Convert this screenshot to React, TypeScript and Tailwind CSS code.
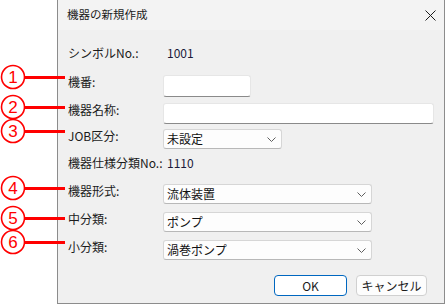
const FONT = { fontFamily: '"Noto Sans CJK JP", "Noto Sans", sans-serif' };

const CALLOUTS = [
  { n: '1', y: 77 },
  { n: '2', y: 107 },
  { n: '3', y: 131 },
  { n: '4', y: 188 },
  { n: '5', y: 218 },
  { n: '6', y: 242 },
];

function Callout({ n, y }: { n: string; y: number }) {
  return (
    <div className="absolute left-0 flex items-center" style={{ top: y - 13 }}>
      <svg width="26" height="26" viewBox="0 0 26 26" className="shrink-0">
        <circle cx="13" cy="13" r="11.5" fill="white" stroke="#ff0000" strokeWidth="1.6" />
        <text x="13" y="19" textAnchor="middle" fontSize="17" fill="#ff0000" fontFamily="Liberation Sans, sans-serif">
          {n}
        </text>
      </svg>
      <div className="w-[40px] h-[3px] bg-[#ff0000] -ml-[1px]" />
    </div>
  );
}

function Chevron() {
  return (
    <svg width="9" height="5" viewBox="0 0 9 5" className="shrink-0">
      <path d="M0.5 0.5 L4.5 4.5 L8.5 0.5" fill="none" stroke="#5f5f5f" strokeWidth="1" />
    </svg>
  );
}

function Select({ value, width }: { value: string; width: number }) {
  return (
    <div
      className="h-[20px] flex items-center justify-between pl-[3px] pr-[5px] bg-[#fdfdfd] border border-[#d6d6d6] border-b-[#b8b8b8] rounded-[3px] text-[12px] text-[#111]"
      style={{ width }}
    >
      <span className="leading-[16px]">{value}</span>
      <Chevron />
    </div>
  );
}

function Row({ label, mt, h, children }: { label: string; mt: number; h: number; children: React.ReactNode }) {
  return (
    <div className="flex items-start" style={{ marginTop: mt, height: h }}>
      <div className="w-[95px] text-[12px] leading-[16px] text-[#1b1b1b] -mt-[1px] whitespace-nowrap">{label}</div>
      {children}
    </div>
  );
}

export default function App() {
  return (
    <div className="relative w-[447px] h-[305px] bg-white overflow-hidden" style={FONT}>
      <div className="ml-[57px] w-[388px] h-[304px] border-l border-r border-b border-[#8c8c8c] bg-[#f0f0f0] flex flex-col">
        <div className="h-[30px] bg-[#f3f3f3] flex items-center justify-between pl-[9px] pr-[8px]">
          <span className="text-[11.5px] text-[#1b1b1b]">機器の新規作成</span>
          <svg width="11" height="11" viewBox="0 0 11 11">
            <path d="M0.5 0.5 L10.5 10.5 M10.5 0.5 L0.5 10.5" stroke="#1b1b1b" strokeWidth="1" />
          </svg>
        </div>

        <div className="pl-[10px] flex flex-col">
          <div className="flex items-center h-[16px] mt-[15px] text-[12px] leading-[16px] text-[#1b1b1b]">
            <span className="w-[99px]">シンボルNo.:</span>
            <span className="text-[#1a1a3a]">1001</span>
          </div>

          <Row label="機番:" mt={14} h={22}>
            <div className="w-[88px] h-[22px] bg-white border border-[#e6e6e6] border-b-[#8a8a8a] rounded-[3px]" />
          </Row>

          <Row label="機器名称:" mt={6} h={21}>
            <div className="w-[271px] h-[21px] bg-white border border-[#e6e6e6] border-b-[#8a8a8a] rounded-[3px]" />
          </Row>

          <Row label="JOB区分:" mt={5} h={20}>
            <Select value="未設定" width={119} />
          </Row>

          <div className="flex items-center h-[16px] mt-[6px] text-[12px] leading-[16px] text-[#1b1b1b]">
            <span className="w-[99px] whitespace-nowrap">機器仕様分類No.:</span>
            <span className="text-[#1a1a3a]">1110</span>
          </div>

          <Row label="機器形式:" mt={13} h={20}>
            <Select value="流体装置" width={209} />
          </Row>

          <Row label="中分類:" mt={8} h={20}>
            <Select value="ポンプ" width={209} />
          </Row>

          <Row label="小分類:" mt={8} h={20}>
            <Select value="渦巻ポンプ" width={209} />
          </Row>
        </div>

        <div className="flex justify-end gap-[9px] pr-[17px] mt-[15px]">
          <button className="w-[73px] h-[21px] bg-white border border-[#0067c0] rounded-[4px] text-[12px] leading-[16px] text-[#1b1b1b]">
            OK
          </button>
          <button className="w-[71px] h-[21px] bg-[#fdfdfd] border border-[#d0d0d0] rounded-[4px] text-[12px] leading-[16px] text-[#1b1b1b]">
            キャンセル
          </button>
        </div>
      </div>

      {CALLOUTS.map(c => (
        <Callout key={c.n} n={c.n} y={c.y} />
      ))}
    </div>
  );
}
